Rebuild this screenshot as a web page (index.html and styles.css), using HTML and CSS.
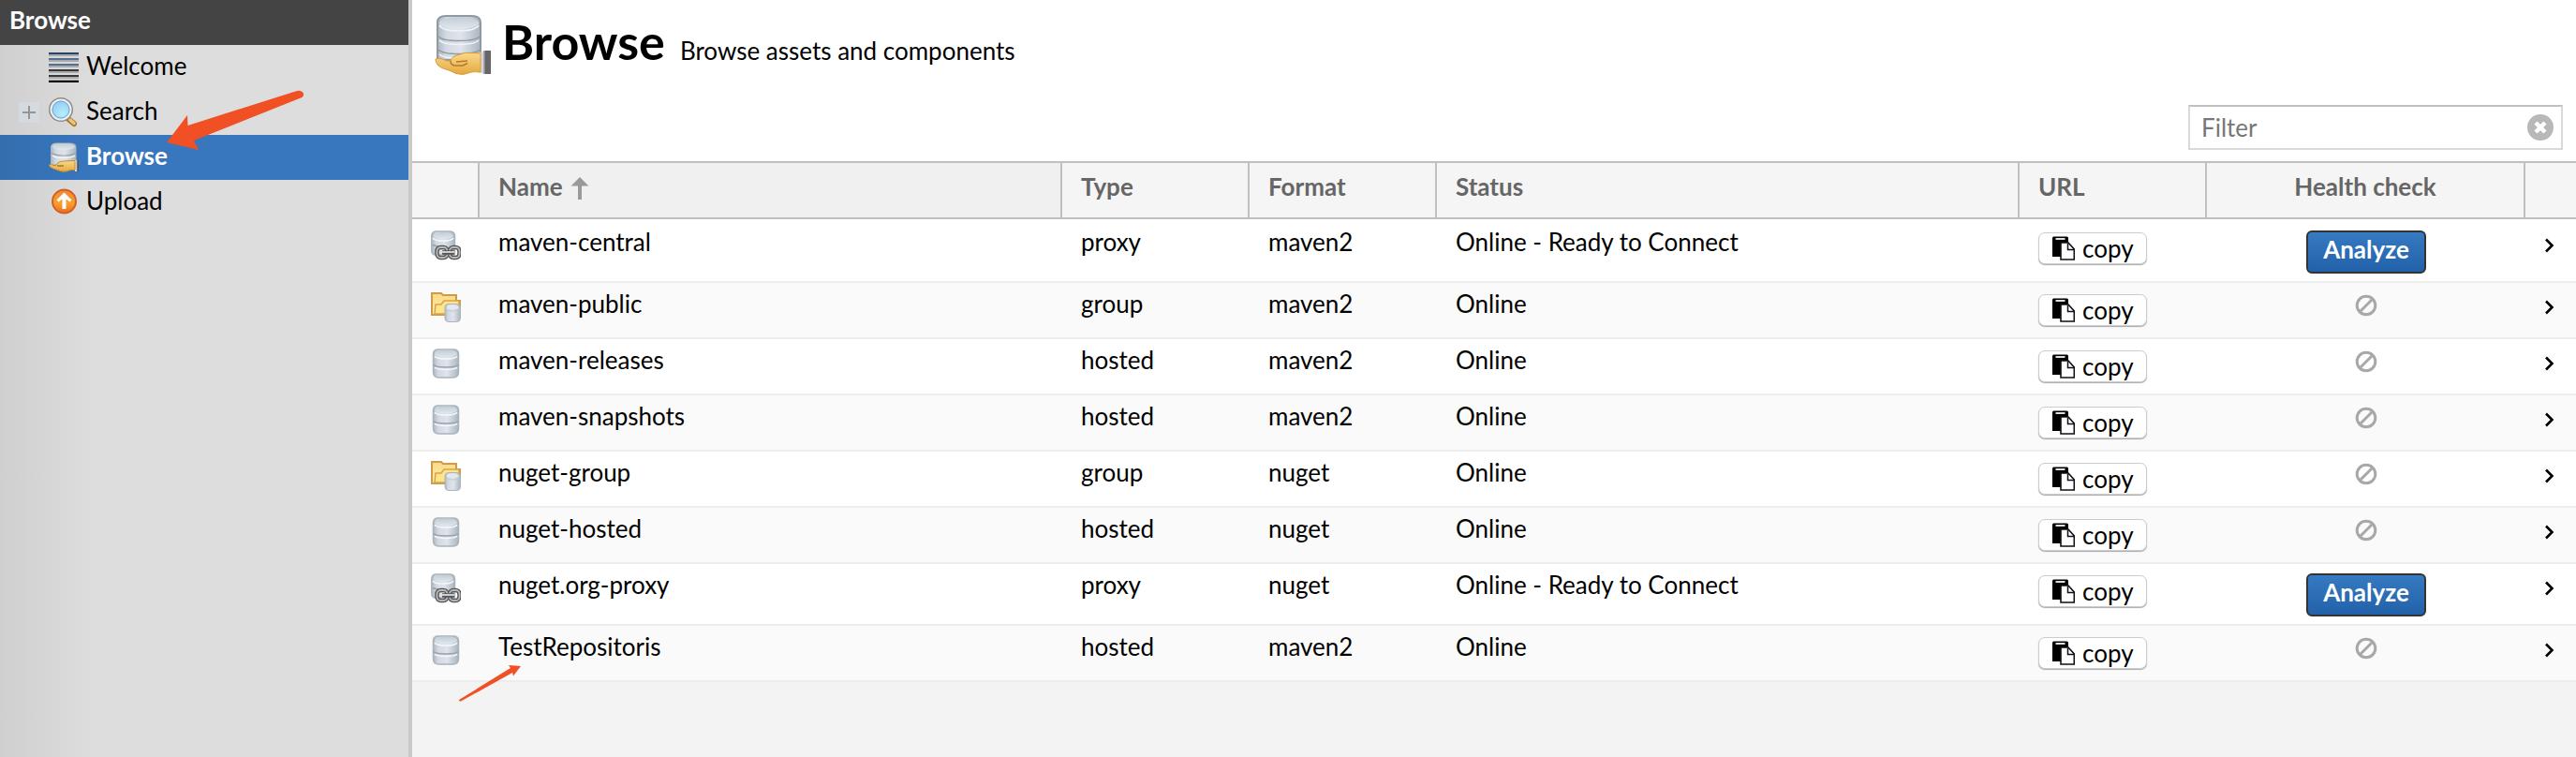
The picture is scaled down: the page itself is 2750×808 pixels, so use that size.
FILE: index.html
```html
<!DOCTYPE html>
<html lang="en">
<head>
<meta charset="utf-8">
<title>Browse</title>
<link rel="stylesheet" href="styles.css">
</head>
<body>
<svg class="defs" aria-hidden="true">
  <defs>
    <linearGradient id="steel" x1="0" x2="1" y1="0" y2="0"><stop offset="0" stop-color="#aeb8c0"/><stop offset=".2" stop-color="#d3d9e2"/><stop offset=".55" stop-color="#e0e4ec"/><stop offset="1" stop-color="#abb5bd"/></linearGradient>
    <linearGradient id="lid" x1="0" x2="0" y1="0" y2="1"><stop offset="0" stop-color="#c2ccd4"/><stop offset="1" stop-color="#e1e8ee"/></linearGradient>
    <linearGradient id="skin" x1="0" x2="0" y1="0" y2="1"><stop offset="0" stop-color="#fbd98a"/><stop offset="1" stop-color="#e2a93f"/></linearGradient>
    <linearGradient id="gold" x1="0" x2="0" y1="0" y2="1"><stop offset="0" stop-color="#f8d988"/><stop offset="1" stop-color="#fff0a8"/></linearGradient>
    <linearGradient id="cuff" x1="0" x2="1" y1="0" y2="0"><stop offset="0" stop-color="#f2f4f8"/><stop offset=".5" stop-color="#b8bcc4"/><stop offset=".6" stop-color="#777"/><stop offset="1" stop-color="#444"/></linearGradient>
    <radialGradient id="glass" cx=".6" cy=".7" r=".8"><stop offset="0" stop-color="#b4f1ff"/><stop offset="1" stop-color="#8cc0ee"/></radialGradient>
    <linearGradient id="ember" x1="0" x2="0" y1="0" y2="1"><stop offset="0" stop-color="#f08a35"/><stop offset=".6" stop-color="#f9a02c"/><stop offset="1" stop-color="#e8662a"/></linearGradient>
  </defs>
  <symbol id="db" viewBox="0 0 32 32">
    <path d="M2.500 6Q2.500 1 8 1h16q5.500 0 5.500 5v19q0 6-6 6h-15q-6 0-6-6z" fill="url(#steel)" stroke="#a9b4bb" stroke-width="1.500"/>
    <ellipse cx="16" cy="5.500" rx="12" ry="4" fill="url(#lid)"/>
    <path d="M4 8q2 3 12 3t12-3M4 20q2 2.500 12 2.500T28 20" fill="none" stroke="#f3f6fa" stroke-width="1.500"/>
    <path d="M3 17.500q2 2.500 13 2.500t13-2.500" fill="none" stroke="#98a3ad" stroke-width="1.500"/>
  </symbol>
  <symbol id="proxy" viewBox="0 0 32 32">
    <path d="M.8 5.500Q1 1 6 1h14q5.500 0 5.500 5v20H5q-4.200 0-4.200-5z" fill="url(#steel)" stroke="#a9b4bb" stroke-width="1.500"/>
    <ellipse cx="13" cy="5.500" rx="10.500" ry="3.600" fill="url(#lid)"/>
    <path d="M2 8q2 3 11 3t11-3" fill="none" stroke="#f3f6fa" stroke-width="1.500"/>
    <path d="M2 15.500q3 1.500 8 1.500" fill="none" stroke="#98a3ad" stroke-width="1.500"/>
    <g fill="none"><rect x="6.500" y="18" width="11" height="11" rx="4" stroke="#555" stroke-width="4.500"/><rect x="20" y="18" width="10.500" height="11" rx="4" stroke="#555" stroke-width="4.500"/><rect x="6.500" y="18" width="11" height="11" rx="4" stroke="#b9b9b9" stroke-width="1.800"/><rect x="20" y="18" width="10.500" height="11" rx="4" stroke="#b9b9b9" stroke-width="1.800"/><path d="M12 23.500h13" stroke="#555" stroke-width="4.500"/><path d="M12 23h13" stroke="#ddd" stroke-width="1.800"/></g>
  </symbol>
  <symbol id="group" viewBox="0 0 32 32">
    <path d="M1 1h10l2 2h14v6h4v15H1z" fill="url(#gold)" stroke="#cf9b4a" stroke-width="2"/>
    <path d="M4 23l1-10h6l3-4h16v14z" fill="#fde58c" stroke="#d6a24c" stroke-width="1.500"/>
    <path d="M15 16q0-3.500 4-3.500h8.500q4 0 4 3.500v11.500q0 4-4 4H19q-4 0-4-4z" fill="url(#steel)" stroke="#a9b4bb" stroke-width="1"/>
    <ellipse cx="23.200" cy="16" rx="6.500" ry="2.400" fill="#e3e9ef"/>
    <path d="M16 18q2 2 7 2t8-2" fill="none" stroke="#c2cbd3" stroke-width="1"/>
  </symbol>
  <symbol id="browse-small" viewBox="0 0 32 32">
    <path d="M2.500 5Q2.500 1 8 1h15q6 0 6 4v19h-26.500z" fill="url(#steel)" stroke="#a9b4bb" stroke-width="1"/>
    <ellipse cx="16" cy="4.500" rx="12" ry="3.500" fill="url(#lid)"/>
    <path d="M3 11q3 3 13 3t13-3" fill="none" stroke="#98a3ad" stroke-width="1.200"/>
    <path d="M4 14q3 2.500 12 2.500T28 14" fill="none" stroke="#f3f6fa" stroke-width="1.200"/>
    <path d="M28 19h4v12h-4z" fill="url(#cuff)"/>
    <path d="M0 24q3-1 7 1 3-5 9-5l12-.5v10q-6-.5-9 1.500-5 1-10-1.500-8-2.500-9-5.500z" fill="url(#skin)" stroke="#c08a35" stroke-width="1"/>
    <path d="M9 25h7" stroke="#a77428" stroke-width="1.500"/>
  </symbol>
  <symbol id="browse-large" viewBox="0 0 60 64">
    <path d="M3 8Q3 1 12 1h27q10 0 10 7v40H3z" fill="url(#steel)" stroke="#8f9aa3" stroke-width="2"/>
    <ellipse cx="26" cy="8.500" rx="21" ry="6.500" fill="url(#lid)"/>
    <path d="M5 11q4 6 21 6t21-6M5 27q4 4.500 21 4.500T47 27M5 42q4 4 21 4" fill="none" stroke="#f0f4f8" stroke-width="1.500"/>
    <path d="M4 23q4 4.500 22 4.500T48 23M4 37q4 4.500 22 4.500T48 37" fill="none" stroke="#909ba5" stroke-width="1.500"/>
    <path d="M48 40l6-2v25l-8-2z" fill="#d3d6dc"/><path d="M53 38h7v25h-7z" fill="#66666a"/>
    <path d="M53 38v25" stroke="#999" stroke-width="1.500"/>
    <path d="M1 47q4-2 12 2h4q1-5 10-7 5-2.500 12-1.500l10 .500v20q-8-1-12 .500-6 3.500-14 1-8-4-14-5.500-8-3-8-10z" fill="url(#skin)" stroke="#d69c3c" stroke-width="1"/>
    <path d="M17 49q0 5 6 5h7l5-2.500M23 50l12-1" fill="none" stroke="#b8782c" stroke-width="1.500"/>
  </symbol>
  <symbol id="clip" viewBox="0 0 24 26">
    <path d="M0 2q0-1.500 1.500-1.500h14Q17 .5 17 2v20H0z"/><path d="M3.500 3h10" stroke="#ddd" stroke-width="2"/>
    <path d="M9 7h8l6.300 7v11H9z" fill="#fff" stroke="#111" stroke-width="1.600"/><path d="M16.500 8v6.500H23" fill="none" stroke="#111" stroke-width="1.500"/>
  </symbol>
  <symbol id="ban" viewBox="0 0 24 24"><g fill="none" stroke="#a8a8a8" stroke-width="3"><circle cx="12" cy="12" r="9.800"/><path d="M5 19L19 5"/></g></symbol>
  <symbol id="chev" viewBox="0 0 12 16"><path d="M2 1.500l6.500 6.500L2 14.500" fill="none" stroke="#000" stroke-width="2.600"/></symbol>
</svg>

<div class="app">
  <aside class="sidebar">
    <h2 class="sidebar-title">Browse</h2>
    <nav class="menu">
      <a class="item" href="#welcome"><span class="toggle"></span>
        <svg class="icon" viewBox="0 0 32 32"><path d="M0 2h32M0 8h32M0 14h32M0 20h32M0 26h32M0 31h32" stroke="#a8abae" stroke-width="4"/><path d="M0 1h32" stroke="#2a4466" stroke-width="2"/><path d="M0 7h32M0 13h32" stroke="#566f8f" stroke-width="2"/><path d="M0 19h32M0 25h32" stroke="#383838" stroke-width="2"/><path d="M0 31h32" stroke="#000" stroke-width="2"/></svg>
        <span class="label">Welcome</span></a>
      <a class="item" href="#search"><span class="toggle"><svg class="plus" viewBox="0 0 22 22"><path d="M0 0h22v22H0z" fill="#d5dae0"/><path d="M4 11h14M11 4v14" stroke="#959595" stroke-width="2"/></svg></span>
        <svg class="icon" viewBox="0 0 32 32"><path d="M21 23l6 5" stroke="#a9772c" stroke-width="6" stroke-linecap="round"/><path d="M23 24l4 3.500" stroke="#edc67b" stroke-width="3.500" stroke-linecap="round"/><circle cx="13" cy="13" r="11.500" fill="url(#glass)" stroke="#8c8c8c" stroke-width="3"/><circle cx="13" cy="13" r="10.500" fill="none" stroke="#f1f1f1" stroke-width="2"/><circle cx="13" cy="13" r="9" fill="none" stroke="#6fa4d8" stroke-width="1"/></svg>
        <span class="label">Search</span></a>
      <a class="item active" href="#browse"><span class="toggle"></span>
        <svg class="icon"><use href="#browse-small"/></svg>
        <span class="label">Browse</span></a>
      <a class="item" href="#upload"><span class="toggle"></span>
        <svg class="icon" viewBox="0 0 32 32"><circle cx="16.500" cy="15" r="14" fill="#e8e0dc"/><circle cx="16.500" cy="15" r="12.500" fill="url(#ember)" stroke="#cf6028" stroke-width="2"/><path d="M16.500 5.500l8 8-2 2-4-3V23h-4V12.500l-4 3-2-2z" fill="#fff"/></svg>
        <span class="label">Upload</span></a>
    </nav>
  </aside>

  <main class="main">
    <header class="head">
      <div class="heading">
        <svg class="head-icon"><use href="#browse-large"/></svg>
        <h1 class="title">Browse</h1>
        <p class="subtitle">Browse assets and components</p>
      </div>
      <div class="filter">
        <input class="filter-input" type="text" placeholder="Filter" aria-label="Filter">
        <button class="clear" type="button" aria-label="Clear filter"><svg class="clear-icon" viewBox="0 0 28 28"><circle cx="14" cy="14" r="14" fill="#b8b8b8"/><path d="M9 9l10 10M19 9L9 19" stroke="#fff" stroke-width="4.500"/></svg></button>
      </div>
    </header>

    <table class="grid">
      <colgroup><col class="w-icon"><col><col class="w-small"><col class="w-small"><col><col class="w-small"><col class="w-health"><col class="w-go"></colgroup>
      <thead>
        <tr><th></th><th class="sorted">Name<svg class="sort" viewBox="0 0 20 24"><path d="M10 0l9.500 9.500H12V24H8V9.500H.5z" fill="#999"/></svg></th><th>Type</th><th>Format</th><th>Status</th><th>URL</th><th class="center">Health check</th><th></th></tr>
      </thead>
      <tbody>
        <tr><td class="kind"><svg class="icon"><use href="#proxy"/></svg></td><td>maven-central</td><td>proxy</td><td>maven2</td><td>Online - Ready to Connect</td><td class="url"><button class="copy" type="button"><svg class="clip"><use href="#clip"/></svg>copy</button></td><td class="health"><button class="analyze" type="button">Analyze</button></td><td class="go"><svg class="chev"><use href="#chev"/></svg></td></tr>
        <tr><td class="kind"><svg class="icon"><use href="#group"/></svg></td><td>maven-public</td><td>group</td><td>maven2</td><td>Online</td><td class="url"><button class="copy" type="button"><svg class="clip"><use href="#clip"/></svg>copy</button></td><td class="health"><svg class="ban"><use href="#ban"/></svg></td><td class="go"><svg class="chev"><use href="#chev"/></svg></td></tr>
        <tr><td class="kind"><svg class="icon"><use href="#db"/></svg></td><td>maven-releases</td><td>hosted</td><td>maven2</td><td>Online</td><td class="url"><button class="copy" type="button"><svg class="clip"><use href="#clip"/></svg>copy</button></td><td class="health"><svg class="ban"><use href="#ban"/></svg></td><td class="go"><svg class="chev"><use href="#chev"/></svg></td></tr>
        <tr><td class="kind"><svg class="icon"><use href="#db"/></svg></td><td>maven-snapshots</td><td>hosted</td><td>maven2</td><td>Online</td><td class="url"><button class="copy" type="button"><svg class="clip"><use href="#clip"/></svg>copy</button></td><td class="health"><svg class="ban"><use href="#ban"/></svg></td><td class="go"><svg class="chev"><use href="#chev"/></svg></td></tr>
        <tr><td class="kind"><svg class="icon"><use href="#group"/></svg></td><td>nuget-group</td><td>group</td><td>nuget</td><td>Online</td><td class="url"><button class="copy" type="button"><svg class="clip"><use href="#clip"/></svg>copy</button></td><td class="health"><svg class="ban"><use href="#ban"/></svg></td><td class="go"><svg class="chev"><use href="#chev"/></svg></td></tr>
        <tr><td class="kind"><svg class="icon"><use href="#db"/></svg></td><td>nuget-hosted</td><td>hosted</td><td>nuget</td><td>Online</td><td class="url"><button class="copy" type="button"><svg class="clip"><use href="#clip"/></svg>copy</button></td><td class="health"><svg class="ban"><use href="#ban"/></svg></td><td class="go"><svg class="chev"><use href="#chev"/></svg></td></tr>
        <tr><td class="kind"><svg class="icon"><use href="#proxy"/></svg></td><td>nuget.org-proxy</td><td>proxy</td><td>nuget</td><td>Online - Ready to Connect</td><td class="url"><button class="copy" type="button"><svg class="clip"><use href="#clip"/></svg>copy</button></td><td class="health"><button class="analyze" type="button">Analyze</button></td><td class="go"><svg class="chev"><use href="#chev"/></svg></td></tr>
        <tr><td class="kind"><svg class="icon"><use href="#db"/></svg></td><td>TestRepositoris</td><td>hosted</td><td>maven2</td><td>Online</td><td class="url"><button class="copy" type="button"><svg class="clip"><use href="#clip"/></svg>copy</button></td><td class="health"><svg class="ban"><use href="#ban"/></svg></td><td class="go"><svg class="chev"><use href="#chev"/></svg></td></tr>
      </tbody>
    </table>
  </main>
</div>

<svg class="pointer pointer-menu" viewBox="0 0 150 66" aria-hidden="true"><path d="M1 56L23 27l.5 11L140 1q5-1 7 2.500.5 4-3 5L30 54l5 10z" fill="#f15024"/></svg>
<svg class="pointer pointer-row" viewBox="0 0 68 40" aria-hidden="true"><path d="M67 2L54 1l2 3L1 38q0 2 2 1.500L58 9l1 3.500z" fill="#f15024"/></svg>
</body>
</html>
```
FILE: styles.css
```css
* { box-sizing: border-box; }

body {
  position: relative;
  margin: 0;
  background: #f3f3f3;
  color: #000;
  font: 26px/32px Lato, "Open Sans", sans-serif;
}

button, input { font: inherit; }
svg { display: block; flex: none; }
.defs { position: absolute; width: 0; height: 0; }
.icon { width: 32px; height: 32px; }

.app { display: flex; min-height: 100vh; }

/* Sidebar */
.sidebar {
  flex: none;
  width: 440px;
  border-right: 4px solid #c9c9c9;
  background: linear-gradient(90deg, #cfcfcf, #ddd 100px);
}
.sidebar-title {
  margin: 0;
  padding: 5px 10px 11px;
  background: #444;
  color: #fff;
  font-size: 26px;
  line-height: 32px;
}
.item {
  display: flex;
  align-items: center;
  height: 48px;
  color: #000;
  text-decoration: none;
}
.active {
  background: linear-gradient(90deg, #346eae, #3876be 100px);
  color: #fff;
  font-weight: bold;
}
.toggle { width: 52px; padding-left: 20px; }
.plus { width: 22px; height: 22px; }
.label { padding: 0 8px 4px; }

/* Page header */
.main { flex: 1; min-width: 0; }
.head {
  display: flex;
  flex-direction: column;
  gap: 32px;
  padding: 16px 14px 12px 24px;
  background: #fff;
}
.heading { display: flex; align-items: baseline; height: 64px; }
.head-icon { align-self: flex-start; width: 60px; height: 64px; margin-right: 12px; }
.title { margin: 0 16px 0 0; font-size: 52px; line-height: 56px; }
.subtitle { margin: 0; }

.filter { position: relative; align-self: flex-end; width: 400px; }
.filter-input {
  display: block;
  width: 100%;
  height: 48px;
  padding: 0 52px 0 12px;
  border: 2px solid #d9d9d9;
  border-top-color: #c0c0c0;
  background: #fff;
}
.filter-input::placeholder { color: #777; }
.clear {
  position: absolute;
  top: 10px;
  right: 10px;
  padding: 0;
  border: 0;
  background: none;
}
.clear-icon { width: 28px; height: 28px; }

/* Repository grid */
.grid {
  width: 100%;
  border-spacing: 0;
  table-layout: fixed;
}
.w-icon { width: 72px; }
.w-small { width: 200px; }
.w-health { width: 340px; }
.w-go { width: 54px; }

th {
  padding: 9px 20px 17px;
  border: solid #c0c0c0;
  border-width: 2px 2px 2px 0;
  background: #f5f5f5;
  color: #666;
  text-align: left;
  vertical-align: top;
}
th:last-child { border-right: 0; }
.sorted { background: #f0f0f0; }
.center { text-align: center; }
.sort { display: inline-block; width: 20px; height: 24px; margin-left: 8px; vertical-align: -4px; }

td {
  padding: 6px 20px 0;
  border-bottom: 2px solid #ededed;
  background: #fff;
  vertical-align: top;
}
tr:nth-child(even) td { background: #fafafa; }
tbody tr:first-child td { border-top: 2px solid #fff; }
td.kind { padding-top: 10px; }
td.url { padding-top: 12px; padding-bottom: 12px; }
td.health { padding-top: 10px; padding-bottom: 8px; }
td.go { padding-top: 18px; }

.copy {
  display: flex;
  align-items: center;
  gap: 8px;
  width: 116px;
  height: 34px;
  padding: 0 14px;
  border: 1px solid #ccc;
  border-radius: 7px;
  background: #fff;
  box-shadow: 0 1px 1px #aaa;
  line-height: 32px;
}
.clip { width: 24px; height: 26px; }
.analyze {
  display: block;
  width: 128px;
  height: 46px;
  margin: 0 auto;
  padding: 2px 0 8px;
  border: 2px solid #333;
  border-radius: 6px;
  background: linear-gradient(#367ac2, #2261a9);
  color: #fff;
  font-weight: bold;
}
.ban { width: 24px; height: 24px; margin: 2px auto 0; }
.chev { width: 12px; height: 16px; }

/* Callout arrows drawn over the page */
.pointer { position: absolute; }
.pointer-menu { left: 177px; top: 96px; width: 150px; height: 66px; }
.pointer-row { left: 489px; top: 709px; width: 68px; height: 40px; }
```
